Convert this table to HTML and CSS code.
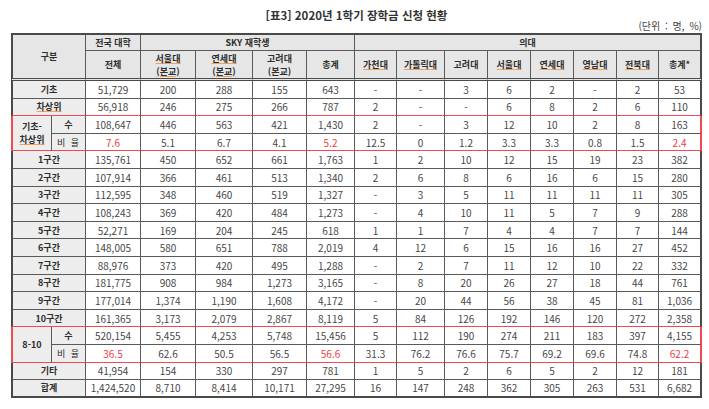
FILE: index.html
```html
<!DOCTYPE html>
<html lang="ko">
<head>
<meta charset="utf-8">
<link rel="stylesheet" href="styles.css">
</head>
<body>
<div class="page">
  <div class="title">[표3] 2020년 1학기 장학금 신청 현황</div>
  <div class="unit">(단위 : 명, %)</div>
  <table class="tbl">
    <colgroup>
      <col style="width:41px"><col style="width:34px">
      <col style="width:55px"><col style="width:55px"><col style="width:57px"><col style="width:54px"><col style="width:48px">
      <col style="width:42px"><col style="width:48px"><col style="width:43px"><col style="width:43px"><col style="width:43px"><col style="width:43px"><col style="width:42px"><col style="width:43px">
    </colgroup>
    <thead>
      <tr class="h1">
        <th class="L hb" colspan="2" rowspan="2">구분</th>
        <th>전국 대학</th>
        <th colspan="4">SKY 재학생</th>
        <th class="R" colspan="8">의대</th>
      </tr>
      <tr class="h2">
        <th class="hb">전체</th>
        <th class="hb"><span class="sp">서울대</span><br><span class="sp">(본교)</span></th>
        <th class="hb"><span class="sp">연세대</span><br><span class="sp">(본교)</span></th>
        <th class="hb">고려대<br>(본교)</th>
        <th class="hb">총계</th>
        <th class="hb"><span class="sp">가천대</span></th>
        <th class="hb"><span class="sp">가톨릭대</span></th>
        <th class="hb">고려대</th>
        <th class="hb"><span class="sp">서울대</span></th>
        <th class="hb"><span class="sp">연세대</span></th>
        <th class="hb"><span class="sp">영남대</span></th>
        <th class="hb"><span class="sp">전북대</span></th>
        <th class="hb R">총계*</th>
      </tr>
    </thead>
    <tbody>
      <tr><th class="L lab" colspan="2">기초</th><td>51,729</td><td>200</td><td>288</td><td>155</td><td>643</td><td>-</td><td>-</td><td>3</td><td>6</td><td>2</td><td>-</td><td>2</td><td class="R">53</td></tr>
      <tr class="rb"><th class="L lab" colspan="2"><span class="sp">차상위</span></th><td>56,918</td><td>246</td><td>275</td><td>266</td><td>787</td><td>2</td><td>-</td><td>-</td><td>6</td><td>8</td><td>2</td><td>6</td><td class="R">110</td></tr>
      <tr class="g"><th class="L lab gl grp" rowspan="2">기초-<br><span class="sp">차상위</span></th><th class="lab">수</th><td>108,647</td><td>446</td><td>563</td><td>421</td><td>1,430</td><td>2</td><td>-</td><td>3</td><td>12</td><td>10</td><td>2</td><td>8</td><td class="R gr">163</td></tr>
      <tr class="g rb"><th class="lab nb">비 율</th><td class="red">7.6</td><td>5.1</td><td>6.7</td><td>4.1</td><td class="red">5.2</td><td>12.5</td><td>0</td><td>1.2</td><td>3.3</td><td>3.3</td><td>0.8</td><td>1.5</td><td class="R gr red">2.4</td></tr>
      <tr><th class="L lab" colspan="2">1구간</th><td>135,761</td><td>450</td><td>652</td><td>661</td><td>1,763</td><td>1</td><td>2</td><td>10</td><td>12</td><td>15</td><td>19</td><td>23</td><td class="R">382</td></tr>
      <tr><th class="L lab" colspan="2">2구간</th><td>107,914</td><td>366</td><td>461</td><td>513</td><td>1,340</td><td>2</td><td>6</td><td>8</td><td>6</td><td>16</td><td>6</td><td>15</td><td class="R">280</td></tr>
      <tr><th class="L lab" colspan="2">3구간</th><td>112,595</td><td>348</td><td>460</td><td>519</td><td>1,327</td><td>-</td><td>3</td><td>5</td><td>11</td><td>11</td><td>11</td><td>11</td><td class="R">305</td></tr>
      <tr><th class="L lab" colspan="2">4구간</th><td>108,243</td><td>369</td><td>420</td><td>484</td><td>1,273</td><td>-</td><td>4</td><td>10</td><td>11</td><td>5</td><td>7</td><td>9</td><td class="R">288</td></tr>
      <tr><th class="L lab" colspan="2">5구간</th><td>52,271</td><td>169</td><td>204</td><td>245</td><td>618</td><td>1</td><td>1</td><td>7</td><td>4</td><td>4</td><td>7</td><td>7</td><td class="R">144</td></tr>
      <tr><th class="L lab" colspan="2">6구간</th><td>148,005</td><td>580</td><td>651</td><td>788</td><td>2,019</td><td>4</td><td>12</td><td>6</td><td>15</td><td>16</td><td>16</td><td>27</td><td class="R">452</td></tr>
      <tr><th class="L lab" colspan="2">7구간</th><td>88,976</td><td>373</td><td>420</td><td>495</td><td>1,288</td><td>-</td><td>2</td><td>7</td><td>11</td><td>12</td><td>10</td><td>22</td><td class="R">332</td></tr>
      <tr><th class="L lab" colspan="2">8구간</th><td>181,775</td><td>908</td><td>984</td><td>1,273</td><td>3,165</td><td>-</td><td>8</td><td>20</td><td>26</td><td>27</td><td>18</td><td>44</td><td class="R">761</td></tr>
      <tr><th class="L lab" colspan="2">9구간</th><td>177,014</td><td>1,374</td><td>1,190</td><td>1,608</td><td>4,172</td><td>-</td><td>20</td><td>44</td><td>56</td><td>38</td><td>45</td><td>81</td><td class="R">1,036</td></tr>
      <tr class="rb"><th class="L lab" colspan="2">10구간</th><td>161,365</td><td>3,173</td><td>2,079</td><td>2,867</td><td>8,119</td><td>5</td><td>84</td><td>126</td><td>192</td><td>146</td><td>120</td><td>272</td><td class="R">2,358</td></tr>
      <tr class="g"><th class="L lab gl grp" rowspan="2">8-10</th><th class="lab">수</th><td>520,154</td><td>5,455</td><td>4,253</td><td>5,748</td><td>15,456</td><td>5</td><td>112</td><td>190</td><td>274</td><td>211</td><td>183</td><td>397</td><td class="R gr">4,155</td></tr>
      <tr class="g rb"><th class="lab nb">비 율</th><td class="red">36.5</td><td>62.6</td><td>50.5</td><td>56.5</td><td class="red">56.6</td><td>31.3</td><td>76.2</td><td>76.6</td><td>75.7</td><td>69.2</td><td>69.6</td><td>74.8</td><td class="R gr red">62.2</td></tr>
      <tr><th class="L lab" colspan="2">기타</th><td>41,954</td><td>154</td><td>330</td><td>297</td><td>781</td><td>1</td><td>5</td><td>2</td><td>6</td><td>5</td><td>2</td><td>12</td><td class="R">181</td></tr>
      <tr class="last"><th class="L lab" colspan="2">합계</th><td>1,424,520</td><td>8,710</td><td>8,414</td><td>10,171</td><td>27,295</td><td>16</td><td>147</td><td>248</td><td>362</td><td>305</td><td>263</td><td>531</td><td class="R">6,682</td></tr>
    </tbody>
  </table>
</div>
</body>
</html>
```
FILE: styles.css
```css
html, body {
  margin: 0;
  padding: 0;
  background: #ffffff;
}
body {
  font-family: "Noto Sans CJK KR", "Noto Sans", sans-serif;
  color: #3a3a3a;
}
.page {
  padding: 8px 7px 0 11px;
  width: 691px;
}
.title {
  text-align: center;
  font-size: 11.5px;
  line-height: 14px;
  height: 14px;
  font-weight: 700;
  color: #333333;
}
.unit {
  text-align: right;
  font-size: 10px;
  line-height: 10px;
  height: 10px;
  margin-top: -1px;
  margin-bottom: 2px;
  color: #444444;
  word-spacing: 2px;
}
.tbl {
  border-collapse: separate;
  border-spacing: 0;
  table-layout: fixed;
  width: 691px;
  font-size: 10px;
}
.tbl th, .tbl td {
  padding: 0;
  text-align: center;
  vertical-align: middle;
  border-right: 1px solid #5a5a5a;
  border-bottom: 1px solid #5a5a5a;
  line-height: 13px;
  white-space: nowrap;
  overflow: hidden;
}
.tbl td {
  color: #474747;
  background: #ffffff;
}
.tbl th {
  font-size: 9px;
  font-weight: 700;
  color: #2e2e2e;
  background: #e6e6e6;
}
.tbl th.lab {
  background: #ededed;
}
.tbl th.nb {
  font-weight: 400;
  letter-spacing: 1px;
  word-spacing: 1px;
}
.tbl thead tr.h1 th {
  border-top: 2px solid #4a4a4a;
  height: 15px;
}
.tbl thead tr.h2 th {
  height: 27px;
}
.tbl th.hb {
  border-bottom: 3px double #4a4a4a;
}
.tbl .L {
  border-left: 2px solid #4a4a4a;
}
.tbl .R {
  border-right: 2px solid #4a4a4a;
}
.tbl tbody tr {
  height: 17.6px;
}
.tbl tbody tr.rb th, .tbl tbody tr.rb td {
  border-bottom-color: #ef4a4f;
}
.tbl tr.g .gl {
  border-left-color: #ef4a4f;
}
.tbl .grp {
  border-bottom-color: #ef4a4f;
}
.tbl tr.g .gr {
  border-right-color: #ef4a4f;
}
.tbl tr.last th, .tbl tr.last td {
  border-bottom: 2px solid #4a4a4a;
}
.red {
  color: #ee3b44 !important;
}
.sp {
  text-decoration: underline;
  text-decoration-color: #f2a15a;
  text-underline-offset: 1px;
}
```
